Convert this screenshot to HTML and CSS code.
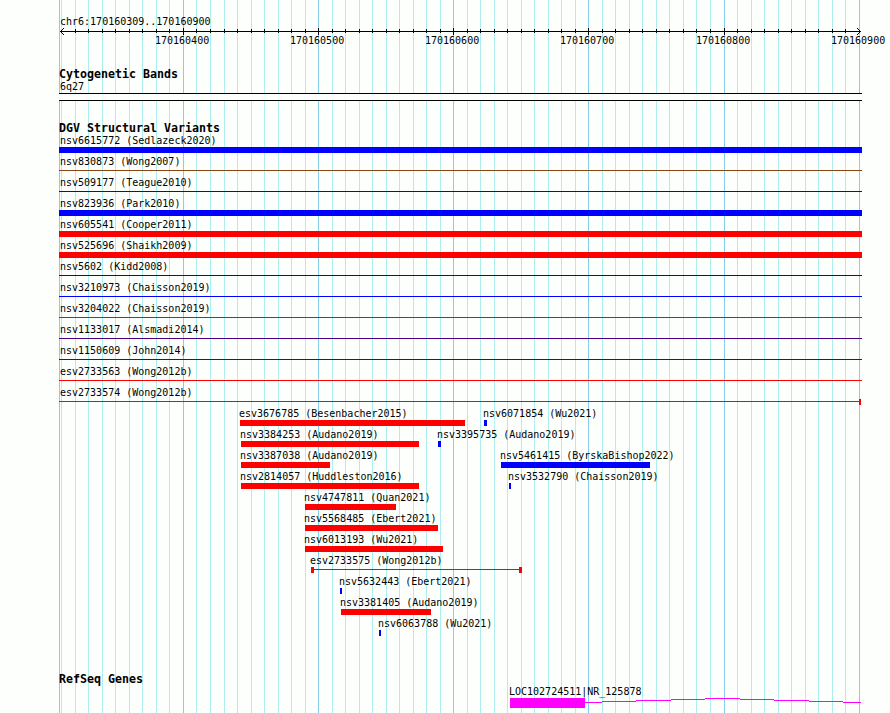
FILE: index.html
```html
<!DOCTYPE html>
<html lang="en">
<head>
<meta charset="utf-8">
<title>chr6:170160309..170160900</title>
<link rel="stylesheet" href="styles.css">
</head>
<body>
<main class="browser">
  <svg class="gridlines" width="890" height="713" aria-hidden="true">
    <path class="minor" d="M61.5 0v713M75.5 0v713M88.5 0v713M102.5 0v713M115.5 0v713M129.5 0v713M142.5 0v713M156.5 0v713M169.5 0v713M196.5 0v713M210.5 0v713M224.5 0v713M237.5 0v713M251.5 0v713M264.5 0v713M278.5 0v713M291.5 0v713M305.5 0v713M332.5 0v713M345.5 0v713M359.5 0v713M372.5 0v713M386.5 0v713M399.5 0v713M413.5 0v713M426.5 0v713M440.5 0v713M467.5 0v713M480.5 0v713M494.5 0v713M507.5 0v713M521.5 0v713M534.5 0v713M548.5 0v713M561.5 0v713M575.5 0v713M602.5 0v713M615.5 0v713M629.5 0v713M642.5 0v713M656.5 0v713M669.5 0v713M683.5 0v713M696.5 0v713M710.5 0v713M737.5 0v713M751.5 0v713M764.5 0v713M778.5 0v713M791.5 0v713M805.5 0v713M818.5 0v713M832.5 0v713M845.5 0v713"/>
    <path class="major" d="M59.5 0v713M183.5 0v713M318.5 0v713M453.5 0v713M588.5 0v713M724.5 0v713M859.5 0v713"/>
  </svg>

  <header class="ruler">
    <div class="label region">chr6:170160309..170160900</div>
    <svg class="axis" width="890" height="7" aria-hidden="true">
      <path d="M60 3.5h801M183.5 0v7M318.5 0v7M453.5 0v7M588.5 0v7M724.5 0v7"/>
      <path d="M75.5 1v4M88.5 1v4M102.5 1v4M115.5 1v4M129.5 1v4M142.5 1v4M156.5 1v4M169.5 1v4M196.5 1v4M210.5 1v4M224.5 1v4M237.5 1v4M251.5 1v4M264.5 1v4M278.5 1v4M291.5 1v4M305.5 1v4M332.5 1v4M345.5 1v4M359.5 1v4M372.5 1v4M386.5 1v4M399.5 1v4M413.5 1v4M426.5 1v4M440.5 1v4M467.5 1v4M480.5 1v4M494.5 1v4M507.5 1v4M521.5 1v4M534.5 1v4M548.5 1v4M561.5 1v4M575.5 1v4M602.5 1v4M615.5 1v4M629.5 1v4M642.5 1v4M656.5 1v4M669.5 1v4M683.5 1v4M696.5 1v4M710.5 1v4M737.5 1v4M751.5 1v4M764.5 1v4M778.5 1v4M791.5 1v4M805.5 1v4M818.5 1v4M832.5 1v4M845.5 1v4"/>
      <path d="M60 3.5h1M61 2.5h1M61 4.5h1M62 1.5h1M62 5.5h1M63 .5h1M63 6.5h1M859 2.5h1M859 4.5h1M858 1.5h1M858 5.5h1M857 .5h1M857 6.5h1"/>
    </svg>
    <div class="ticks">
      <span class="label" style="--x:155px">170160400</span>
      <span class="label" style="--x:290px">170160500</span>
      <span class="label" style="--x:425px">170160600</span>
      <span class="label" style="--x:560px">170160700</span>
      <span class="label" style="--x:696px">170160800</span>
      <span class="label" style="--x:831px">170160900</span>
    </div>
  </header>

  <section class="track bands">
    <h2>Cytogenetic Bands</h2>
    <div class="label">6q27</div>
    <div class="band"></div>
  </section>

  <section class="track variants">
    <h2>DGV Structural Variants</h2>
    <div class="row"><div class="item full"><span class="label">nsv6615772 (Sedlazeck2020)</span><i class="bar blue"></i></div></div>
    <div class="row"><div class="item full"><span class="label">nsv830873 (Wong2007)</span><i class="bar thin brown"></i></div></div>
    <div class="row"><div class="item full"><span class="label">nsv509177 (Teague2010)</span><i class="bar thin blue"></i></div></div>
    <div class="row"><div class="item full"><span class="label">nsv823936 (Park2010)</span><i class="bar blue"></i></div></div>
    <div class="row"><div class="item full"><span class="label">nsv605541 (Cooper2011)</span><i class="bar red"></i></div></div>
    <div class="row"><div class="item full"><span class="label">nsv525696 (Shaikh2009)</span><i class="bar red"></i></div></div>
    <div class="row"><div class="item full"><span class="label">nsv5602 (Kidd2008)</span><i class="bar thin blue"></i></div></div>
    <div class="row"><div class="item full"><span class="label">nsv3210973 (Chaisson2019)</span><i class="bar thin blue"></i></div></div>
    <div class="row"><div class="item full"><span class="label">nsv3204022 (Chaisson2019)</span><i class="bar thin red"></i></div></div>
    <div class="row"><div class="item full"><span class="label">nsv1133017 (Alsmadi2014)</span><i class="bar thin indigo"></i></div></div>
    <div class="row"><div class="item full"><span class="label">nsv1150609 (John2014)</span><i class="bar thin indigo"></i></div></div>
    <div class="row"><div class="item full"><span class="label">esv2733563 (Wong2012b)</span><i class="bar thin red"></i></div></div>
    <div class="row"><div class="item full"><span class="label">esv2733574 (Wong2012b)</span><i class="bar span open"></i></div></div>
    <div class="row">
      <div class="item" style="--x:240px;--w:225px"><span class="label">esv3676785 (Besenbacher2015)</span><i class="bar red"></i></div>
      <div class="item" style="--x:484px;--w:3px"><span class="label">nsv6071854 (Wu2021)</span><i class="bar blue"></i></div>
    </div>
    <div class="row">
      <div class="item" style="--x:241px;--w:178px"><span class="label">nsv3384253 (Audano2019)</span><i class="bar red"></i></div>
      <div class="item" style="--x:438px;--w:3px"><span class="label">nsv3395735 (Audano2019)</span><i class="bar blue"></i></div>
    </div>
    <div class="row">
      <div class="item" style="--x:241px;--w:89px"><span class="label">nsv3387038 (Audano2019)</span><i class="bar red"></i></div>
      <div class="item" style="--x:501px;--w:149px"><span class="label">nsv5461415 (ByrskaBishop2022)</span><i class="bar blue"></i></div>
    </div>
    <div class="row">
      <div class="item" style="--x:241px;--w:178px"><span class="label">nsv2814057 (Huddleston2016)</span><i class="bar red"></i></div>
      <div class="item" style="--x:509px;--w:2px"><span class="label">nsv3532790 (Chaisson2019)</span><i class="bar blue"></i></div>
    </div>
    <div class="row"><div class="item" style="--x:305px;--w:91px"><span class="label">nsv4747811 (Quan2021)</span><i class="bar red"></i></div></div>
    <div class="row"><div class="item" style="--x:305px;--w:133px"><span class="label">nsv5568485 (Ebert2021)</span><i class="bar red"></i></div></div>
    <div class="row"><div class="item" style="--x:305px;--w:138px"><span class="label">nsv6013193 (Wu2021)</span><i class="bar red"></i></div></div>
    <div class="row"><div class="item" style="--x:311px;--w:211px"><span class="label">esv2733575 (Wong2012b)</span><i class="bar span"></i></div></div>
    <div class="row"><div class="item" style="--x:340px;--w:2px"><span class="label">nsv5632443 (Ebert2021)</span><i class="bar blue"></i></div></div>
    <div class="row"><div class="item" style="--x:341px;--w:90px"><span class="label">nsv3381405 (Audano2019)</span><i class="bar red"></i></div></div>
    <div class="row"><div class="item" style="--x:379px;--w:2px"><span class="label">nsv6063788 (Wu2021)</span><i class="bar blue"></i></div></div>
  </section>

  <section class="track genes">
    <h2>RefSeq Genes</h2>
    <div class="row">
      <div class="item" style="--x:510px;--w:351px">
        <span class="label">LOC102724511|NR_125878</span>
        <svg class="gene" width="351" height="10" aria-hidden="true">
          <rect width="75" height="10"/>
          <path d="M75 4.5h17M92 3.5h34M126 2.5h35M161 1.5h34M195 .5h35M230 1.5h34M264 2.5h35M299 3.5h34M333 4.5h18"/>
        </svg>
      </div>
    </div>
  </section>
</main>
</body>
</html>
```
FILE: styles.css
```css
body {
  margin: 0;
  background: #fdfffc;
  color: #000;
  font-family: "DejaVu Sans Mono", monospace;
}

.browser {
  position: relative;
  isolation: isolate;
  display: flow-root;
  width: 890px;
  height: 713px;
  overflow: hidden;
}

.gridlines {
  position: absolute;
  inset: 0;
  z-index: -1;
  shape-rendering: crispEdges;
}

.minor { stroke: #afeeee; }
.major { stroke: #87ceeb; }

.label {
  display: block;
  font-size: 10px;
  line-height: 13px;
  height: 13px;
  letter-spacing: 0;
  white-space: pre;
}

.ruler { padding-top: 15px; }
.region { margin-left: 60px; }

.axis {
  display: block;
  stroke: #000;
  shape-rendering: crispEdges;
}

.ticks {
  display: grid;
  margin-top: -1px;
}

.ticks .label {
  grid-area: 1 / 1;
  margin-left: var(--x);
}

h2 {
  margin: 0 0 0 59px;
  font-size: 11.63px;
  font-weight: bold;
  line-height: 14px;
  height: 14px;
  white-space: pre;
}

.bands { margin-top: 20px; }
.bands h2 { height: 13px; }
.bands .label { margin-left: 60px; }

.band {
  box-sizing: border-box;
  width: 803px;
  height: 8px;
  margin-left: 59px;
  border: solid #000;
  border-width: 1px 0;
  background: #fdfffc;
}

.variants { margin-top: 20px; }
.variants h2 { height: 13px; }

.row {
  display: grid;
  height: 21px;
}

.item {
  --shift: -1px;
  grid-area: 1 / 1;
  width: var(--w);
  margin-left: var(--x);
}

.item.full {
  --x: 59px;
  --w: 803px;
  --shift: 1px;
}

.item .label { margin-left: var(--shift); }

.bar {
  display: block;
  height: 6px;
}

.thin {
  height: 1px;
  margin-top: 2px;
}

.red { background: #f00; }
.blue { background: #00f; }
.brown { background: #8b4513; }
.indigo { background: #4b0082; }

.span {
  box-sizing: border-box;
  border: solid #f00;
  border-width: 0 3px;
  background: linear-gradient(#f00, #f00) 0 2px / 100% 1px no-repeat;
}

.span.open {
  width: 802px;
  border-width: 0 2px 0 0;
}

.genes { margin-top: 34px; }
.genes h2 { height: 13px; }

.gene {
  display: block;
  fill: #f0f;
  stroke: #f0f;
  shape-rendering: crispEdges;
}

.gene rect { stroke: none; }
```
